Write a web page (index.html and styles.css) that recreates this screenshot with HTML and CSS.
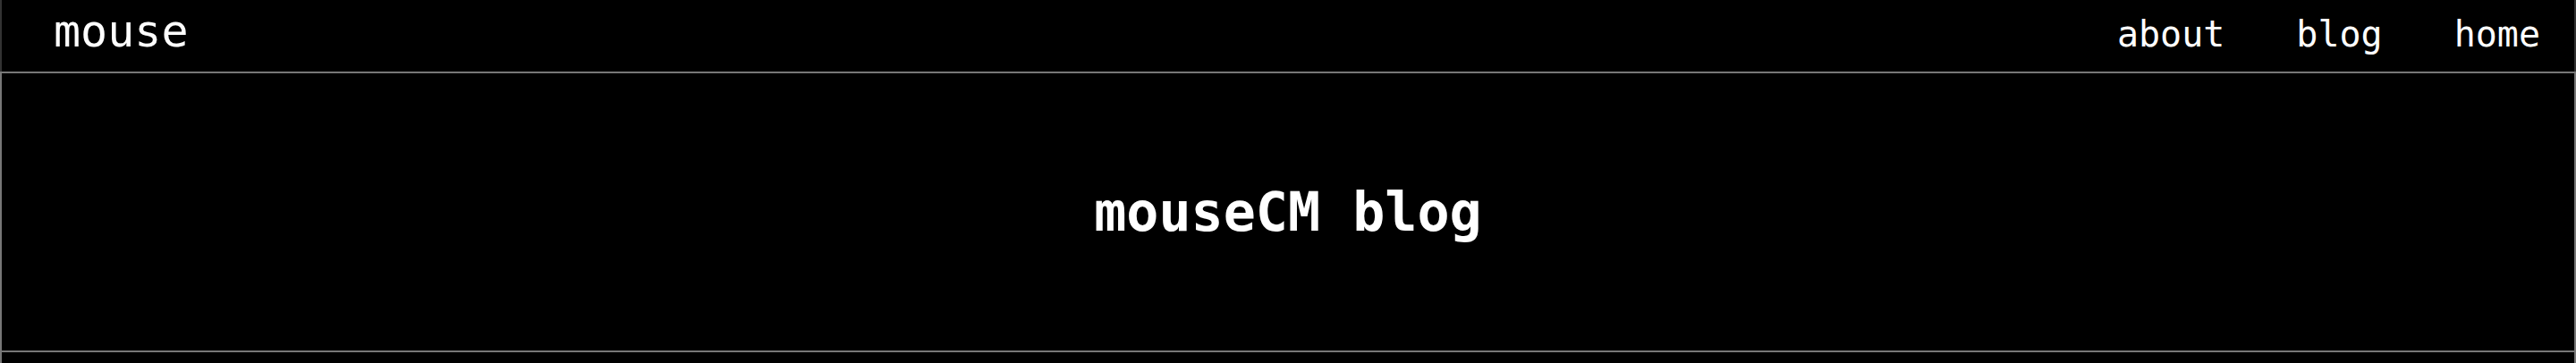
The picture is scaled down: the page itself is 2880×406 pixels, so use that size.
FILE: index.html
```html
<!DOCTYPE html>
<html lang="en">
<head>
<meta charset="utf-8">
<title>mouseCM blog</title>
<link rel="stylesheet" href="styles.css">
</head>
<body>
<header class="topbar">
  <a class="logo" href="#">mouse</a>
  <nav class="nav">
    <a class="nav-link" href="#">about</a>
    <a class="nav-link" href="#">blog</a>
    <a class="nav-link" href="#">home</a>
  </nav>
</header>
<main class="page">
  <section class="hero">
    <h1 class="hero-title">mouseCM blog</h1>
  </section>
  <section class="content"></section>
</main>
</body>
</html>
```

FILE: styles.css
```css
html, body {
  margin: 0;
  padding: 0;
  background: #000;
  color: #fff;
  font-family: "DejaVu Sans Mono", "Liberation Mono", monospace;
}

a {
  color: #fff;
  text-decoration: none;
}

.topbar {
  box-sizing: border-box;
  height: 80px;
  display: flex;
  align-items: baseline;
  justify-content: space-between;
  padding: 6px 0 0 58px;
  border-left: 2px solid #333;
  border-right: 2px solid #333;
}

.logo {
  font-size: 50px;
}

.nav {
  display: flex;
  align-items: baseline;
}

.nav-link {
  font-size: 40px;
  padding: 0 38px 0 42px;
}

.page {
  display: flex;
  flex-direction: column;
}

.hero {
  border: 2px solid #777;
  padding: 120px 0;
  display: flex;
  justify-content: center;
}

.hero-title {
  margin: 0;
  font-size: 60px;
  font-weight: bold;
  line-height: normal;
}

.content {
  height: 12px;
  border-left: 2px solid #777;
  border-right: 2px solid #777;
}
```
